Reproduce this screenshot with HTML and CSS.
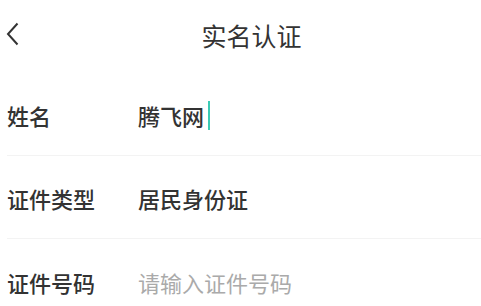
FILE: index.html
```html
<!DOCTYPE html>
<html lang="zh">
<head>
<meta charset="utf-8">
<link rel="stylesheet" href="styles.css">
</head>
<body>
<div class="page">
  <header class="bar">
    <span class="back">
      <svg width="14" height="24" viewBox="0 0 14 24"><path d="M11.5 1.5 L2 12 L11.5 22.5" fill="none" stroke="#333" stroke-width="2"/></svg>
    </span>
    <h1 class="title">实名认证</h1>
  </header>
  <div class="form">
    <div class="row">
      <span class="label">姓名</span>
      <span class="value">腾飞网<span class="caret"></span></span>
    </div>
    <div class="row">
      <span class="label">证件类型</span>
      <span class="value">居民身份证</span>
    </div>
    <div class="row last">
      <span class="label">证件号码</span>
      <span class="value placeholder">请输入证件号码</span>
    </div>
  </div>
</div>
</body>
</html>
```
FILE: styles.css
```css
html, body {
  margin: 0;
  padding: 0;
  background: #fff;
}
.page {
  width: 481px;
  height: 306px;
  overflow: hidden;
  font-family: "Noto Sans CJK SC", "Noto Sans", sans-serif;
  color: #333;
}
.bar {
  height: 73px;
  box-sizing: border-box;
  display: flex;
  align-items: flex-start;
  padding-left: 6px;
  padding-top: 22px;
}
.back {
  width: 14px;
  height: 24px;
  display: flex;
}
.title {
  flex: 1;
  margin: 1px 0 0 0;
  text-align: center;
  font-size: 25px;
  font-weight: 400;
  line-height: 25px;
  padding-left: 2px;
  color: #333;
}
.form {
  margin-left: 7px;
}
.row {
  height: 83px;
  box-sizing: border-box;
  padding-top: 2px;
  display: flex;
  align-items: center;
  border-bottom: 1px solid #f3f3f3;
  font-size: 22px;
  line-height: 22px;
}
.row.last {
  border-bottom: none;
}
.label {
  width: 131px;
  font-weight: 500;
  color: #333;
}
.value {
  display: flex;
  align-items: center;
  font-weight: 500;
  color: #333;
}
.placeholder {
  color: #aaa;
  font-weight: 400;
}
.caret {
  width: 2px;
  height: 29px;
  background: #3ccbb6;
  margin-left: 4px;
}
```
